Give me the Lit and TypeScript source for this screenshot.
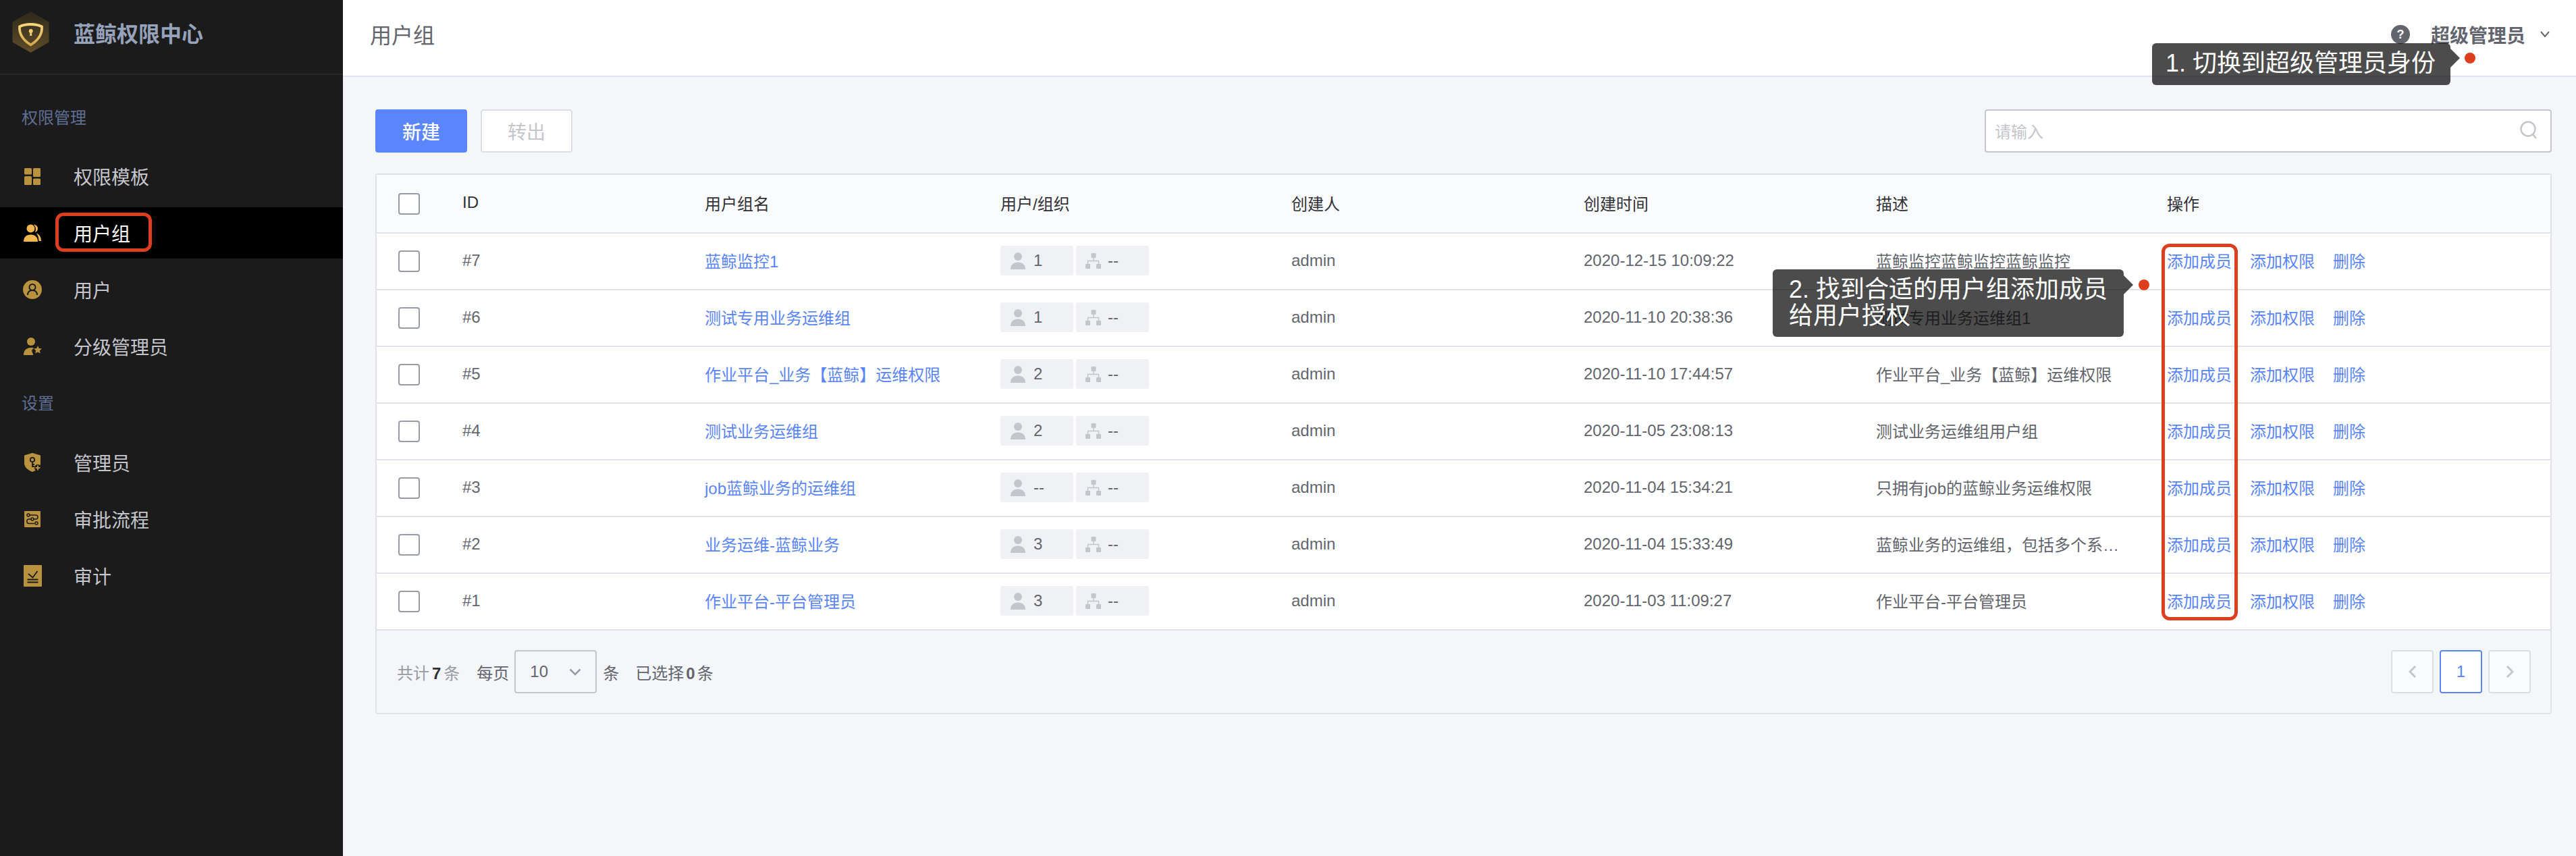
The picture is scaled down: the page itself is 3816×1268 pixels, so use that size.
import { LitElement, html, css, svg } from "lit";
import { customElement } from "lit/decorators.js";

const icons: Record<string, unknown> = {
  grid: svg`<svg width="24" height="25" viewBox="0 0 24 25" fill="currentColor"><rect width="11" height="9.500" rx="1.500"/><rect x="13" width="11" height="13" rx="1.500"/><rect y="12" width="11" height="13" rx="1.500"/><rect x="13" y="15.500" width="11" height="9.500" rx="1.500"/></svg>`,
  users: svg`<svg width="26" height="26" viewBox="0 0 26 26" fill="currentColor"><circle cx="10.500" cy="6.500" r="6"/><path d="M0 26c0-6.500 4-10.500 10.500-10.500S21 19.500 21 26z"/><path d="M15 .8c3.500 0 6 2.500 6 5.700s-2 5-4 5.700c1.500-3.500 1.500-8-2-11.400zM19 13.500c4 1 7 5.500 7 11.500h-3.500c0-4-1-8-3.500-11.500z"/></svg>`,
  user: svg`<svg width="28" height="28" viewBox="0 0 28 28"><circle cx="14" cy="14" r="14" fill="currentColor"/><circle cx="14" cy="10.500" r="4.500" fill="none" stroke="#1b1b1b" stroke-width="2"/><path d="M7 22c0-4.500 3-7 7-7s7 2.500 7 7" fill="none" stroke="#1b1b1b" stroke-width="2"/></svg>`,
  star: svg`<svg width="27" height="26" viewBox="0 0 27 26" fill="currentColor"><circle cx="11" cy="6" r="6"/><path d="M0 26c0-6 3-11 11-11 2 0 3 .3 4.500.8-2.500 1-4 3-3 5.200l2 5z"/><path d="M21 12l1.800 3.900 4.200.5-3.100 2.900.8 4.200-3.700-2.100-3.700 2.100.8-4.200-3.100-2.900 4.200-.5z"/></svg>`,
  shield: svg`<svg width="24" height="28" viewBox="0 0 24 28"><path d="M12 0l12 3.500V15c0 6-5 10.500-12 13C5 25.500 0 21 0 15V3.500z" fill="currentColor"/><circle cx="12" cy="10" r="3.200" fill="none" stroke="#1b1b1b" stroke-width="1.800"/><path d="M12 13v8M12 17h3M12 20h3" stroke="#1b1b1b" stroke-width="1.800" fill="none"/><circle cx="20" cy="22" r="5" fill="#1b1b1b"/><path d="M20 18.500v7M16.500 22h7" stroke="currentColor" stroke-width="2"/></svg>`,
  flow: svg`<svg width="24" height="24" viewBox="0 0 24 24"><rect width="24" height="24" rx="1" fill="currentColor"/><path d="M7 6h10a3 3 0 0 1 0 6H7a3.200 3.200 0 0 0 0 6.400h8" fill="none" stroke="#1b1b1b" stroke-width="1.500"/><circle cx="6" cy="6" r="2" fill="currentColor" stroke="#1b1b1b" stroke-width="1.500"/><circle cx="12" cy="12" r="2" fill="currentColor" stroke="#1b1b1b" stroke-width="1.500"/><circle cx="18" cy="18" r="2" fill="currentColor" stroke="#1b1b1b" stroke-width="1.500"/></svg>`,
  audit: svg`<svg width="27" height="32" viewBox="0 0 27 32"><rect width="27" height="32" rx="1" fill="currentColor"/><path d="M7 13l6.500 5.500L20.500 9" fill="none" stroke="#1b1b1b" stroke-width="1.800"/><path d="M5.500 21.500h16M5.500 25.500h16" stroke="#1b1b1b" stroke-width="1.800"/></svg>`,
};

const logo = svg`<svg width="55" height="61" viewBox="0 0 55 61"><defs>
<linearGradient id="hx" x1="0" y1="0" x2="0" y2="1"><stop offset="0" stop-color="#2e291c"/><stop offset="1" stop-color="#5f4d29"/></linearGradient>
<linearGradient id="sd" x1="0" y1="0" x2="0" y2="1"><stop offset="0" stop-color="#f6d67c"/><stop offset="1" stop-color="#d9a94e"/></linearGradient></defs>
<path d="M27.500 0L54.500 15.500V45.500L27.500 61L.5 45.500V15.500z" fill="url(#hx)"/>
<path d="M27.500 19c6 0 11.500 1 16.500 3.500.8 10.500-4.500 19.500-16.500 27-12-7.500-17.300-16.500-16.500-27 5-2.500 10.500-3.500 16.500-3.500z" fill="none" stroke="url(#sd)" stroke-width="3.800"/>
<circle cx="27.700" cy="29" r="3" fill="#f0cb72"/><path d="M26.500 30h2.400l.5 6h-3.400z" fill="#f0cb72"/></svg>`;

const person = svg`<svg class="ci" width="22" height="25" viewBox="0 0 22 25" fill="#c4c6cc"><circle cx="11" cy="6" r="6"/><path d="M0 25c0-6.500 4-10.500 11-10.500S22 18.500 22 25c-7 .5-15 .5-22 0z"/></svg>`;
const org = svg`<svg class="ci" width="24" height="23" viewBox="0 0 24 23" fill="#c4c6cc"><rect x="8.500" width="7" height="7" rx="1"/><rect y="16" width="7" height="7" rx="1"/><rect x="16" y="16" width="7" height="7" rx="1"/><path d="M12 7v4.500M3.500 16v-4.500h16V16" fill="none" stroke="#c4c6cc" stroke-width="1.500"/></svg>`;

const rows = [
  ["#7", "蓝鲸监控1", "1", "2020-12-15 10:09:22", "蓝鲸监控蓝鲸监控蓝鲸监控"],
  ["#6", "测试专用业务运维组", "1", "2020-11-10 20:38:36", "测试专用业务运维组1"],
  ["#5", "作业平台_业务【蓝鲸】运维权限", "2", "2020-11-10 17:44:57", "作业平台_业务【蓝鲸】运维权限"],
  ["#4", "测试业务运维组", "2", "2020-11-05 23:08:13", "测试业务运维组用户组"],
  ["#3", "job蓝鲸业务的运维组", "--", "2020-11-04 15:34:21", "只拥有job的蓝鲸业务运维权限"],
  ["#2", "业务运维-蓝鲸业务", "3", "2020-11-04 15:33:49", "蓝鲸业务的运维组\uFF0C包括多个系统的权限"],
  ["#1", "作业平台-平台管理员", "3", "2020-11-03 11:09:27", "作业平台-平台管理员"],
];

@customElement("app-root")
export class AppRoot extends LitElement {
  static styles = css`
    :host { display: block; position: relative; width: 3816px; height: 1268px; overflow: hidden; background: #f5f6fa; font-family: "Liberation Sans", "Noto Sans CJK SC", sans-serif; font-size: 24px; color: #63656e; }
    * { box-sizing: border-box; }
    .page { display: flex; height: 100%; }
    .side { width: 508px; flex: none; background: #1b1b1b; color: #c4c6cc; }
    .brand { height: 111px; border-bottom: 2px solid #262626; display: flex; align-items: center; padding: 1px 0 0 18px; gap: 36px; font-size: 32px; font-weight: 700; color: #96a2b9; }
    .brand svg { margin-top: -16px; }
    .brand span { margin-top: -15px; }
    .nav { display: flex; flex-direction: column; }
    .sec { height: 32px; line-height: 32px; padding-left: 32px; color: #5f6f94; }
    .sec.a { margin: 48px 0 32px; }
    .sec.b { margin: 23px 0 33px; }
    .item { height: 76px; margin-bottom: 8px; display: flex; align-items: center; font-size: 28px; padding-left: 34px; color: #c4c6cc; }
    .item .ic { width: 28px; display: flex; justify-content: center; color: #b8923f; margin-right: 47px; }
    .item.on { background: #000; color: #fff; }
    .item.on .ic { color: #f2b650; }
    .main { flex: 1; min-width: 0; display: flex; flex-direction: column; }
    .top { height: 114px; flex: none; background: #fff; border-bottom: 2px solid #e1e4ec; display: flex; align-items: center; padding: 0 38px 10px 40px; color: #63656e; }
    .ttl { font-size: 32px; color: #63656e; flex: 1; margin-top: -3px; }
    .help { width: 28px; height: 28px; border-radius: 50%; background: #63656e; color: #fff; font-size: 18px; font-weight: 700; display: flex; align-items: center; justify-content: center; margin-right: 31px; }
    .who { font-size: 28px; font-weight: 700; margin-right: 21px; }
    .body { padding: 48px 36px 0 48px; }
    .bar { display: flex; gap: 20px; height: 64px; margin-bottom: 31px; }
    .btn { width: 136px; height: 64px; border-radius: 4px; display: flex; align-items: center; justify-content: center; font-size: 28px; }
    .btn.pri { background: #5a85fb; color: #fff; font-weight: 500; }
    .btn.dis { background: #fff; border: 2px solid #dcdee5; color: #c4c6cc; }
    .search { margin-left: auto; width: 840px; height: 64px; background: #fff; border: 2px solid #c4c6cc; border-radius: 4px; display: flex; align-items: center; justify-content: space-between; padding: 0 18px 2px 13px; color: #c4c6cc; }
    .tbl { background: #fff; border: 2px solid #e1e2e8; border-radius: 4px; }
    .row { display: grid; grid-template-columns: 127px 359px 438px 431px 433px 433px 431px 1fr; height: 84px; align-items: center; border-bottom: 2px solid #e1e2e8; }
    .row.head { height: 87px; background: #fafbfd; color: #313238; }
    .row > :not(.chk):not(.chips) { padding-bottom: 3px; }
    .row .chk { padding-left: 32px; }
    .box { display: block; width: 32px; height: 32px; border: 2px solid #979ba5; border-radius: 4px; background: #fff; }
    .link { color: #5a85fb; }
    .chips { display: flex; gap: 4px; margin-bottom: 2px; }
    .chip { width: 108px; height: 44px; background: #f0f1f5; border-radius: 4px; display: flex; align-items: center; padding-left: 15px; }
    .chip .ci { flex: none; }
    .chip b { font-weight: 400; margin-left: 12px; }
    .chip.o { padding-left: 14px; }
    .chip.o b { margin-left: 9px; }
    .desc { white-space: nowrap; overflow: hidden; text-overflow: ellipsis; max-width: 360px; }
    .ops { display: flex; gap: 27px; white-space: nowrap; }
    .foot { height: 122px; display: flex; align-items: center; background: #f5f6fa; padding: 0 29px 0 30px; }
    .muted { color: #979ba5; }
    .muted b { color: #313238; margin: 0 4px; font-weight: 700; }
    .per { margin-left: 25px; }
    .sel { width: 122px; height: 64px; border: 2px solid #c4c6cc; border-radius: 4px; margin: 0 9px 0 8px; display: flex; align-items: center; justify-content: space-between; padding: 0 21px; }
    .cnt b { font-weight: 700; margin: 0 3px; }
    .cnt { margin-left: 24px; }
    .pager { margin-left: auto; display: flex; gap: 9px; }
    .pg { width: 63px; height: 64px; border: 2px solid #dcdee5; border-radius: 4px; background: #fafbfd; display: flex; align-items: center; justify-content: center; }
    .pg.cur { border-color: #5a85fb; color: #5a85fb; background: #fff; }
    .tip { position: absolute; background: rgba(0, 0, 0, 0.7); color: #fff; font-size: 36px; border-radius: 6px; white-space: nowrap; }
    .tip::after { content: ""; position: absolute; right: -14px; border-left: 14px solid rgba(0, 0, 0, 0.7); border-top: 14px solid transparent; border-bottom: 14px solid transparent; }
    .t1 { left: 3188px; top: 64px; width: 442px; height: 62px; line-height: 60px; padding: 0 20px; }
    .t1::after { top: 8px; }
    .t2 { left: 2626px; top: 399px; width: 520px; height: 100px; line-height: 39px; padding: 10px 24px 0; }
    .t2::after { top: 9px; }
    .dot { position: absolute; width: 16px; height: 16px; border-radius: 50%; background: #dd3f1e; }
    .d1 { left: 3651px; top: 78px; }
    .d2 { left: 3168px; top: 414px; }
    .mark { position: absolute; border: 5px solid #dd3f1e; border-radius: 12px; }
    .m1 { left: 82px; top: 315px; width: 143px; height: 58px; }
    .m2 { left: 3202px; top: 361px; width: 113px; height: 558px; }
  `;

  private navItem(icon: string, label: string, on = false) {
    return html`<div class="item ${on ? "on" : ""}"><span class="ic">${icons[icon]}</span><span>${label}</span></div>`;
  }

  render() {
    return html`
      <div class="page">
        <aside class="side">
          <div class="brand">${logo}<span>蓝鲸权限中心</span></div>
          <nav class="nav">
            <div class="sec a">权限管理</div>
            ${this.navItem("grid", "权限模板")}
            ${this.navItem("users", "用户组", true)}
            ${this.navItem("user", "用户")}
            ${this.navItem("star", "分级管理员")}
            <div class="sec b">设置</div>
            ${this.navItem("shield", "管理员")}
            ${this.navItem("flow", "审批流程")}
            ${this.navItem("audit", "审计")}
          </nav>
        </aside>
        <main class="main">
          <header class="top">
            <div class="ttl">用户组</div>
            <div class="help">?</div>
            <div class="who">超级管理员</div>
            <svg width="16" height="10" viewBox="0 0 16 10" fill="none" stroke="#63656e" stroke-width="2"><path d="M2 1l6 7 6-7"/></svg>
          </header>
          <div class="body">
            <div class="bar">
              <div class="btn pri">新建</div>
              <div class="btn dis">转出</div>
              <div class="search"><span>请输入</span>
                <svg width="28" height="30" viewBox="0 0 28 30" fill="none" stroke="#c4c6cc" stroke-width="2.500"><circle cx="13" cy="13" r="10.500"/><path d="M20 21l5 6"/></svg>
              </div>
            </div>
            <section class="tbl">
              <div class="row head">
                <div class="chk"><span class="box"></span></div>
                <div>ID</div><div>用户组名</div><div>用户/组织</div><div>创建人</div><div>创建时间</div><div>描述</div><div>操作</div>
              </div>
              ${rows.map((r) => html`
                <div class="row">
                  <div class="chk"><span class="box"></span></div>
                  <div>${r[0]}</div>
                  <div class="link">${r[1]}</div>
                  <div class="chips">
                    <div class="chip">${person}<b>${r[2]}</b></div>
                    <div class="chip o">${org}<b>--</b></div>
                  </div>
                  <div>admin</div>
                  <div>${r[3]}</div>
                  <div class="desc">${r[4]}</div>
                  <div class="ops link"><span>添加成员</span><span>添加权限</span><span>删除</span></div>
                </div>`)}
              <div class="foot">
                <span class="muted">共计<b>7</b>条</span>
                <span class="per">每页</span>
                <div class="sel"><span>10</span>
                  <svg width="18" height="11" viewBox="0 0 18 11" fill="none" stroke="#979ba5" stroke-width="2.500"><path d="M1.500 1.500L9 9l7.500-7.500"/></svg>
                </div>
                <span>条</span>
                <span class="cnt">已选择<b>0</b>条</span>
                <div class="pager">
                  <div class="pg"><svg width="12" height="18" viewBox="0 0 12 18" fill="none" stroke="#c4c6cc" stroke-width="3"><path d="M10 1L2 9l8 8"/></svg></div>
                  <div class="pg cur">1</div>
                  <div class="pg"><svg width="12" height="18" viewBox="0 0 12 18" fill="none" stroke="#c4c6cc" stroke-width="3"><path d="M2 1l8 8-8 8"/></svg></div>
                </div>
              </div>
            </section>
          </div>
        </main>
      </div>
      <div class="tip t1">1. 切换到超级管理员身份</div>
      <span class="dot d1"></span>
      <div class="tip t2">2. 找到合适的用户组添加成员<br />给用户授权</div>
      <span class="dot d2"></span>
      <div class="mark m1"></div>
      <div class="mark m2"></div>
    `;
  }
}
